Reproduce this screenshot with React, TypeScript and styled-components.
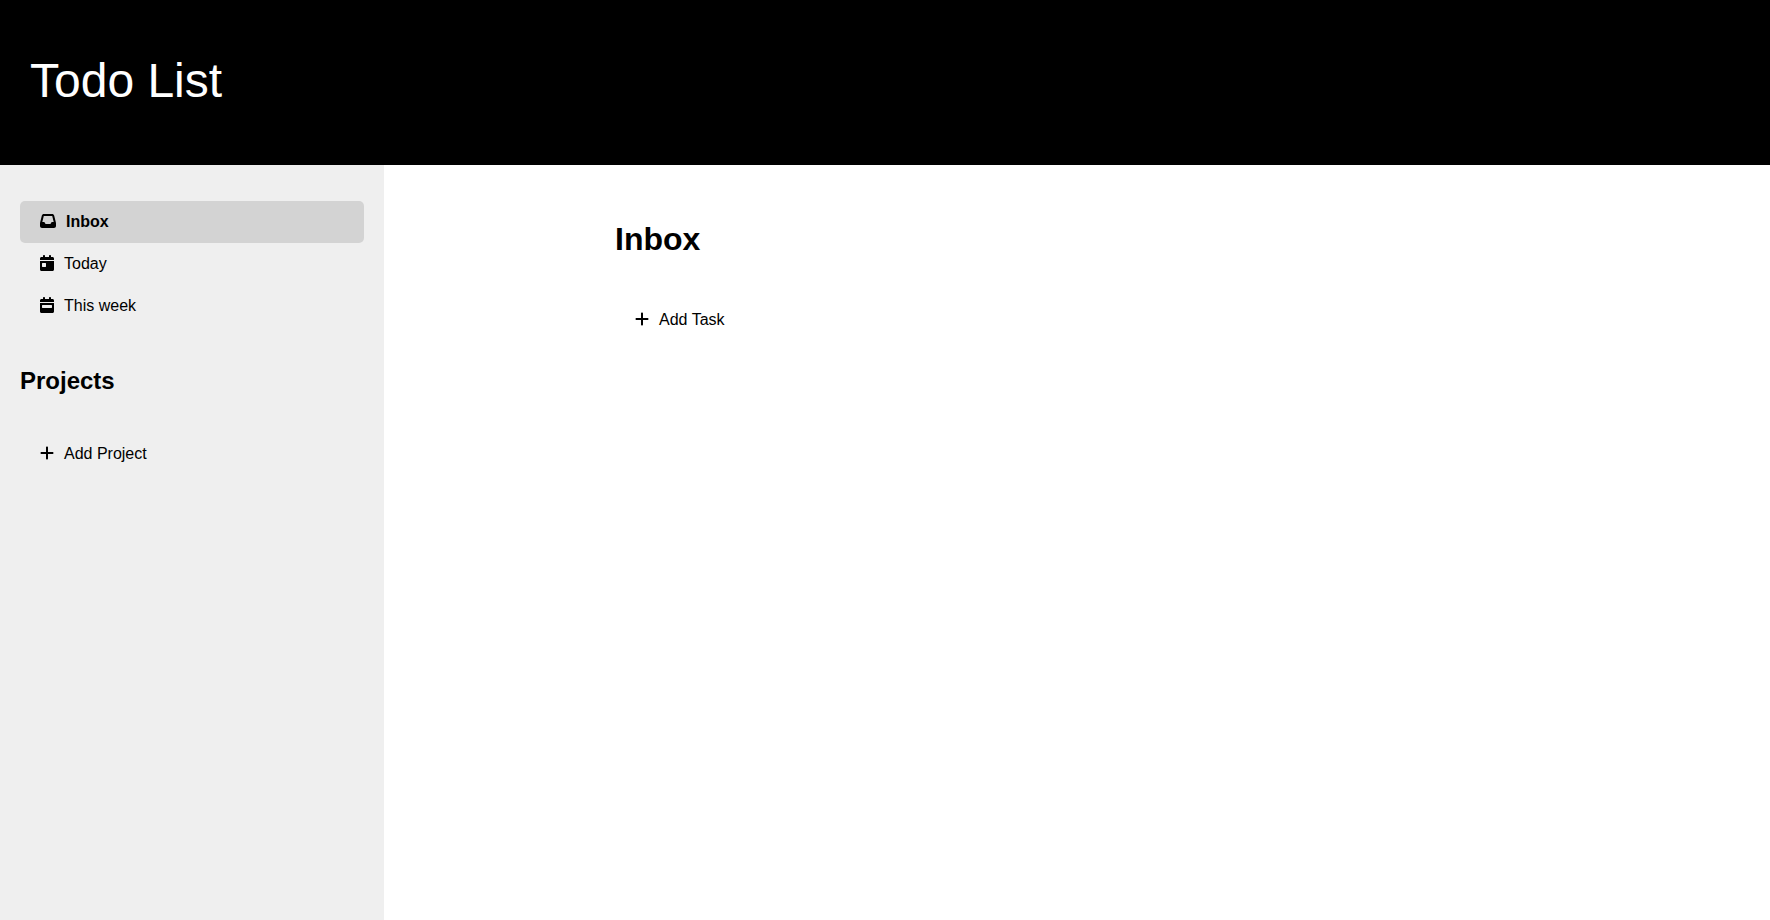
import React from 'react';
import styled, { createGlobalStyle } from 'styled-components';
import { FaInbox, FaCalendarDay, FaCalendarWeek, FaPlus } from 'react-icons/fa6';

const GlobalStyle = createGlobalStyle`
  * { box-sizing: border-box; }
  body { margin: 0; background: #fff; font-family: "Liberation Sans", Arial, sans-serif; font-size: 16px; color: #000; }
`;

const Page = styled.div`
  display: flex;
  flex-direction: column;
  min-height: 100vh;
`;

const Header = styled.header`
  padding: 53px 30px 57px;
  background: #000;
  color: #fff;
`;

const Logo = styled.div`
  font-size: 48px;
  line-height: 55px;
`;

const Body = styled.div`
  display: grid;
  grid-template-columns: 384px 1fr;
  flex: 1;
`;

const Sidebar = styled.aside`
  padding: 36px 20px;
  background: #efefef;
`;

const Menu = styled.nav`
  display: flex;
  flex-direction: column;
`;

const Item = styled.button<{ $active?: boolean; $wideIcon?: boolean }>`
  display: flex;
  align-items: center;
  gap: 10px;
  height: 42px;
  width: 100%;
  padding: 0 20px;
  border: 0;
  border-radius: 5px;
  background: ${(p) => (p.$active ? 'lightgray' : 'transparent')};
  color: #000;
  font: inherit;
  font-weight: ${(p) => (p.$active ? 700 : 400)};
  text-align: left;
  cursor: pointer;

  svg {
    width: ${(p) => (p.$wideIcon ? 16 : 14)}px;
    height: 16px;
    margin-bottom: 2px;
  }
`;

const ProjectsTitle = styled.h2`
  margin: 40px 0 38px;
  font-size: 24px;
  line-height: 28px;
`;

const Main = styled.main`
  display: grid;
  grid-template-columns: 1fr 4fr 1fr;
  padding: 54px 0;
`;

const Content = styled.section`
  grid-column: 2;
`;

const Title = styled.h1`
  margin: 0 0 40px;
  font-size: 32px;
  line-height: 40px;
`;

export default function App() {
  return (
    <Page>
      <GlobalStyle />
      <Header>
        <Logo>Todo List</Logo>
      </Header>
      <Body>
        <Sidebar>
          <Menu>
            <Item type="button" $active $wideIcon><FaInbox />Inbox</Item>
            <Item type="button"><FaCalendarDay />Today</Item>
            <Item type="button"><FaCalendarWeek />This week</Item>
          </Menu>
          <ProjectsTitle>Projects</ProjectsTitle>
          <Item type="button"><FaPlus />Add Project</Item>
        </Sidebar>
        <Main>
          <Content>
            <Title>Inbox</Title>
            <Item type="button"><FaPlus />Add Task</Item>
          </Content>
        </Main>
      </Body>
    </Page>
  );
}
